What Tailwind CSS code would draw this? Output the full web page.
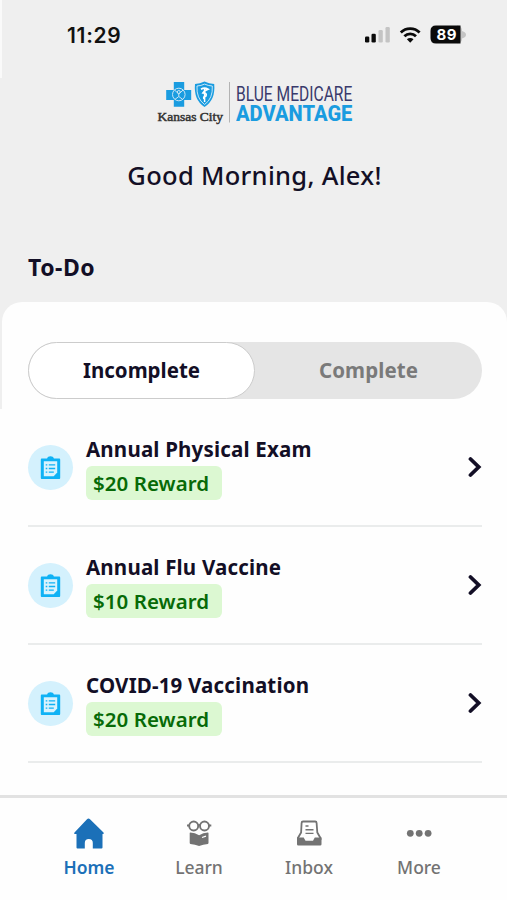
<!DOCTYPE html>
<html lang="en">
<head>
<meta charset="utf-8">
<title>Blue Medicare Advantage</title>
<script src="https://cdn.jsdelivr.net/npm/@tailwindcss/browser@4"></script>
</head>
<body class="bg-[#efefef]">
<svg class="hidden">
  <symbol id="clip" viewBox="0 0 20 24">
    <path fill="#0fb2f5" d="M1.500 2.500H6.600C7 1 8.300.3 10 .3s3 .7 3.400 2.200h5.100c.8 0 1.200.5 1.200 1.200v18c0 .8-.4 1.300-1.200 1.300h-17C.7 23 .3 22.500.3 21.700v-18c0-.7.4-1.200 1.200-1.200z"/>
    <path fill="#d9f3fd" d="M3.300 5.300h13.400v11.200l-3.500 3.700H3.300z"/>
    <path stroke="#0fb2f5" stroke-width="1.300" d="M5.200 8.800h1.600M8.300 8.800h6.400M5.200 12.500h1.600M8.300 12.500h6.400M5.200 16.200h1.600M8.300 16.200h5"/>
  </symbol>
  <symbol id="chev" viewBox="0 0 14 22">
    <path d="M2.500 3 10.700 11l-8.200 8" fill="none" stroke="#130f26" stroke-width="3.800" stroke-linecap="round" stroke-linejoin="miter"/>
  </symbol>
</svg>
<div class="relative w-[507px] h-[900px] flex flex-col overflow-hidden font-['Noto_Sans',sans-serif] text-[#130f26]">
  <div class="absolute left-0 top-0 w-[2px] h-[78px] bg-[#fafafa]"></div>
  <header class="h-[78px] shrink-0 flex justify-between pl-[67px] pr-[40px] pt-[20px]">
    <div class="font-['Inter',sans-serif] font-semibold text-[21px] leading-[31px] tracking-[0.7px] text-[#111]">11:29</div>
    <svg class="w-[104px] h-[30px]" viewBox="363 20 104 30">
      <g fill="#0a0a0a"><rect x="365" y="36.500" width="4.300" height="6" rx="1.300"/><rect x="371.500" y="33.700" width="4.300" height="8.800" rx="1.300"/></g>
      <g fill="#c4c4c4"><rect x="378.500" y="30" width="4.300" height="12.500" rx="1.300"/><rect x="385.500" y="27" width="4.300" height="15.500" rx="1.300"/></g>
      <g fill="none" stroke="#0a0a0a" stroke-width="2.800"><path d="M400.800 32.400a13.400 13.400 0 0 1 18.800 0"/><path d="M404.400 36.300a8.200 8.200 0 0 1 11.600 0"/></g>
      <path fill="#0a0a0a" d="M406.900 39.300a4.700 4.700 0 0 1 6.600 0l-3.300 3.400z"/>
      <path fill="#c4c4c4" d="M457 25.500h1q4 1 4 5v.6q4 1.200 4 3.700t-4 3.700v.8q0 3-4 4h-1z"/>
      <path fill="#0a0a0a" d="M436 25.500h24.500v18H436q-5.500 0-5.500-5.500v-7q0-5.500 5.500-5.500z"/>
      <text x="446.500" y="40.200" text-anchor="middle" font-family="Inter" font-weight="700" font-size="15" textLength="20" fill="#fff">89</text>
    </svg>
  </header>
  <div class="h-[50px] shrink-0 flex pl-[154px]">
    <svg class="w-[76px] h-[50px] shrink-0" viewBox="154 78 76 50">
      <path fill="#1a9ce0" d="M173.800 82h10.400v8h7v10h-7v6.800h-10.400V100h-7.600V90h7.600z"/>
      <g fill="none" stroke="#c9e5f5" stroke-width="1"><circle cx="178.800" cy="94.500" r="6.300"/><circle cx="178.800" cy="92" r="1.500"/><path d="m174.500 90 4.300 4 4.300-4M178.800 94v2.500l-4 3M178.800 96.500l4 3"/></g>
      <path fill="#1a9ce0" d="M195 84q5-.3 9.500-2.500 4.500 2.200 9.700 2.500 1.500 16-9.700 23-11-7-9.500-23z"/>
      <path fill="none" stroke="#d8edf8" stroke-width=".9" d="M197 86q4-.2 7.600-1.900 3.600 1.700 7.700 1.900.8 12.500-7.700 18.500-8.400-6-7.600-18.500z"/>
      <path fill="none" stroke="#fff" stroke-width="1.500" d="M204.600 88v14"/>
      <path fill="none" stroke="#fff" stroke-width="1.800" d="M201 89.200q3.500-2 7 0-4 1.700-5 3.600 4 .2 3 3-3 1-2 3.200"/>
      <text x="157.500" y="120.700" font-family="Liberation Serif" font-size="13" textLength="65.500" lengthAdjust="spacingAndGlyphs" fill="#333" stroke="#333" stroke-width=".5">Kansas City</text>
      <path stroke="#b3b3b3" d="M229.500 82v40.500"/>
    </svg>
    <div class="pl-[6px] pt-[7px] whitespace-nowrap font-['Roboto',sans-serif]">
      <div class="w-[160px] h-[19px] origin-left scale-x-[0.761] text-[20.500px] leading-[19px] text-[#393a6c]">BLUE MEDICARE</div>
      <div class="w-[160px] h-[19px] origin-left scale-x-[0.895] text-[22.500px] leading-[18px] font-extrabold text-[#1a9ce0]">ADVANTAGE</div>
    </div>
  </div>
  <h1 class="mt-[29px] text-center pl-[2px] text-[25.500px] leading-[36px] tracking-[0.300px] font-medium shrink-0">Good Morning, Alex!</h1>
  <h2 class="mt-[58px] ml-[28px] text-[23px] leading-[32px] tracking-[0.500px] font-bold shrink-0">To-Do</h2>
  <main class="relative mt-[19px] ml-[2px] h-[493px] shrink-0 bg-[#fefefe] rounded-t-[20px] pl-[26px] pr-[25px] pt-[40px]">
    <div class="absolute -left-[2px] top-[107px] w-[2px] h-[386px] bg-[#fefefe]"></div>
    <div class="h-[57px] rounded-full bg-[#e5e5e5] flex text-[20.500px] font-bold text-center leading-[56px]">
      <div class="w-[227px] rounded-full bg-white border border-[#cccccc] leading-[54px]">Incomplete</div>
      <div class="flex-1 text-[#7a7a7a] tracking-[0.100px]">Complete</div>
    </div>
    <div class="h-[128px] pt-[34px] flex border-b-2 border-[#eaecec]">
      <div class="w-[45px] h-[45px] mt-[12px] rounded-full bg-[#d4f1fd] flex items-center justify-center"><svg class="w-[21px] h-[24px]"><use href="#clip"/></svg></div>
      <div class="ml-[13px] flex-1">
        <div class="h-[33px] text-[20.500px] tracking-[0.180px] leading-[33px] font-bold">Annual Physical Exam</div>
        <div class="w-[136px] h-[34px] rounded-[6px] bg-[#dcf8d2] pl-[7px] text-[20.500px] tracking-[0.050px] leading-[34px] font-semibold text-[#076a07]">$20 Reward</div>
      </div>
      <svg class="w-[14px] h-[22px] mt-[23px]"><use href="#chev"/></svg>
    </div>
    <div class="h-[118px] pt-[24px] flex border-b-2 border-[#eaecec]">
      <div class="w-[45px] h-[45px] mt-[12px] rounded-full bg-[#d4f1fd] flex items-center justify-center"><svg class="w-[21px] h-[24px]"><use href="#clip"/></svg></div>
      <div class="ml-[13px] flex-1">
        <div class="h-[33px] text-[20.500px] tracking-[0.180px] leading-[33px] font-bold">Annual Flu Vaccine</div>
        <div class="w-[136px] h-[34px] rounded-[6px] bg-[#dcf8d2] pl-[7px] text-[20.500px] tracking-[0.050px] leading-[34px] font-semibold text-[#076a07]">$10 Reward</div>
      </div>
      <svg class="w-[14px] h-[22px] mt-[23px]"><use href="#chev"/></svg>
    </div>
    <div class="h-[118px] pt-[24px] flex border-b-2 border-[#eaecec]">
      <div class="w-[45px] h-[45px] mt-[12px] rounded-full bg-[#d4f1fd] flex items-center justify-center"><svg class="w-[21px] h-[24px]"><use href="#clip"/></svg></div>
      <div class="ml-[13px] flex-1">
        <div class="h-[33px] text-[20.500px] tracking-[0.180px] leading-[33px] font-bold">COVID-19 Vaccination</div>
        <div class="w-[136px] h-[34px] rounded-[6px] bg-[#dcf8d2] pl-[7px] text-[20.500px] tracking-[0.050px] leading-[34px] font-semibold text-[#076a07]">$20 Reward</div>
      </div>
      <svg class="w-[14px] h-[22px] mt-[23px]"><use href="#chev"/></svg>
    </div>
  </main>
  <nav class="flex-1 border-t-[3px] border-[#e2e2e2] bg-[#fefefe] flex pl-[34px] pr-[33px] pt-[18px] text-[17.500px] leading-[26px] font-medium text-[#737373]">
    <div class="w-[110px] flex flex-col items-center font-semibold text-[#1b70b8]">
      <svg class="w-[32px] h-[36px]" viewBox="73 816 32 36"><path fill="#1b70b8" d="M88.500 818.500q.8 0 1.500.7l13.500 13.300q1 1.300-.5 1.500h-.5v13.500q0 1-1 1h-8.700v-5.500q0-4-4-4t-4 4v5.500H77.500q-1 0-1-1V834H75q-1.800-.2-.5-1.500L87 819.200q.7-.7 1.500-.7z"/></svg>
      <div class="mt-[2px]">Home</div>
    </div>
    <div class="w-[110px] flex flex-col items-center tracking-[-0.100px]">
      <svg class="w-[32px] h-[36px]" viewBox="183 816 32 36">
        <g fill="none" stroke="#737373" stroke-width="1.900"><circle cx="193.700" cy="826" r="4.500"/><circle cx="204.500" cy="826" r="4.500"/><path d="M198.200 825.500q.9-.8 1.800 0M189.500 825.500H187M208.800 825.500h2.500"/></g>
        <path fill="#737373" d="M190.300 832.500q4.700.3 8.800 2.700 4.100-2.400 8.800-2.700.6 0 .6.600v10q0 .7-.7.900-4.700.4-8.700 2-4-1.600-8.700-2-.7-.2-.7-.9v-10q0-.6.600-.6z"/>
        <path stroke="#fff" stroke-width="1.200" d="m202 837.500 4-1.400"/>
      </svg>
      <div class="mt-[2px]">Learn</div>
    </div>
    <div class="w-[110px] flex flex-col items-center">
      <svg class="w-[32px] h-[36px]" viewBox="293 816 32 36">
        <path fill="none" stroke="#737373" stroke-width="1.800" stroke-linejoin="round" d="M297.900 840v-2l3.200-5.500.5-9.500q0-1.500 1.500-1.500h12q1.500 0 1.500 1.500l.7 9.500 3.200 5.500v2"/>
        <path fill="#737373" d="M297 837.500h6.700l1.800 3.200h7.500l1.800-3.200h6.700v6.700q0 1.300-1.300 1.300h-21.900q-1.300 0-1.300-1.300z"/>
        <path fill="none" stroke="#737373" stroke-width="1.400" d="M305.500 826h3M305.500 829.700h8M305.500 833.400h8"/>
      </svg>
      <div class="mt-[2px]">Inbox</div>
    </div>
    <div class="w-[110px] flex flex-col items-center">
      <svg class="w-[32px] h-[36px]" viewBox="403 816 32 36" fill="#737373"><circle cx="410.300" cy="833.300" r="3.400"/><circle cx="419.200" cy="833.300" r="3.400"/><circle cx="428.100" cy="833.300" r="3.400"/></svg>
      <div class="mt-[2px]">More</div>
    </div>
  </nav>
</div>
</body>
</html>
